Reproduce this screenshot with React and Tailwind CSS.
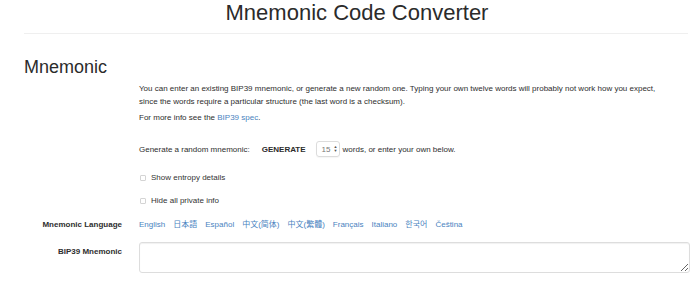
const font = { fontFamily: '"Liberation Sans", "Noto Sans CJK JP", Arial, sans-serif' }

const languages = [
  'English',
  '日本語',
  'Español',
  '中文(简体)',
  '中文(繁體)',
  'Français',
  'Italiano',
  '한국어',
  'Čeština',
]

function Checkbox({ label }) {
  return (
    <label className="flex items-center h-[13px] gap-[5px] text-[8px] leading-[13px] text-[#333]">
      <span className="ml-px w-[6px] h-[6px] border border-[#d4d4d4] rounded-[1px] bg-white" />
      {label}
    </label>
  )
}

export default function App() {
  return (
    <div className="w-[700px] h-[291px] bg-white overflow-hidden text-[#2e2e2e]" style={font}>
      <h1 className="text-[22px] leading-[26px] text-center pl-[14px] text-[#2b2b2b]">Mnemonic Code Converter</h1>
      <div className="ml-[24px] mr-[12px] mt-[7px] border-t border-[#efefef]" />

      <div className="pl-[24px] pr-[10px]">
        <h2 className="mt-[23px] text-[18px] leading-[20px] text-[#2b2b2b]">Mnemonic</h2>

        <div className="flex gap-[17px]">
          <div className="w-[98px] shrink-0" />
          <div className="flex-1 text-[8px] leading-[13px]">
            <p className="mt-[5px]">
              You can enter an existing BIP39 mnemonic, or generate a new random one. Typing your own twelve words will probably not work how you expect,
              <br />
              since the words require a particular structure (the last word is a checksum).
            </p>
            <p className="mt-[3px]">
              For more info see the <span className="text-[#4a83c0]">BIP39 spec</span>.
            </p>

            <div className="mt-[17px] flex items-center h-[16px]">
              <span>Generate a random mnemonic:</span>
              <button className="pl-[12px] pr-[10px] font-bold text-[8px] text-[#2b2b2b]">GENERATE</button>
              <div className="flex items-center h-[16px] w-[24px] pl-[5px] border border-[#dcdcdc] rounded-[3px] text-[#777] shadow-[0_1px_1px_rgba(0,0,0,0.04)]">
                <span>15</span>
                <span className="ml-[3px] flex flex-col items-center leading-none text-[#555]">
                  <span className="text-[4px] leading-[4px]">▲</span>
                  <span className="text-[4px] leading-[4px]">▼</span>
                </span>
              </div>
              <span className="ml-[3px]">words, or enter your own below.</span>
            </div>

            <div className="mt-[14px]">
              <Checkbox label="Show entropy details" />
            </div>
            <div className="mt-[10px]">
              <Checkbox label="Hide all private info" />
            </div>
          </div>
        </div>

        <div className="flex gap-[17px] mt-[11px] text-[8px] leading-[13px]">
          <div className="w-[98px] shrink-0 text-right font-bold">Mnemonic Language</div>
          <div className="flex gap-[8px] text-[#4a83c0]">
            {languages.map((l) => (
              <span key={l}>{l}</span>
            ))}
          </div>
        </div>

        <div className="flex gap-[17px] mt-[11px] text-[8px] leading-[13px]">
          <div className="w-[98px] shrink-0 text-right font-bold pt-[3px]">BIP39 Mnemonic</div>
          <textarea
            className="flex-1 h-[31px] border border-[#dddddd] rounded-[3px] shadow-[inset_0_1px_1px_rgba(0,0,0,0.06)] outline-none"
            defaultValue=""
          />
        </div>
      </div>
    </div>
  )
}
